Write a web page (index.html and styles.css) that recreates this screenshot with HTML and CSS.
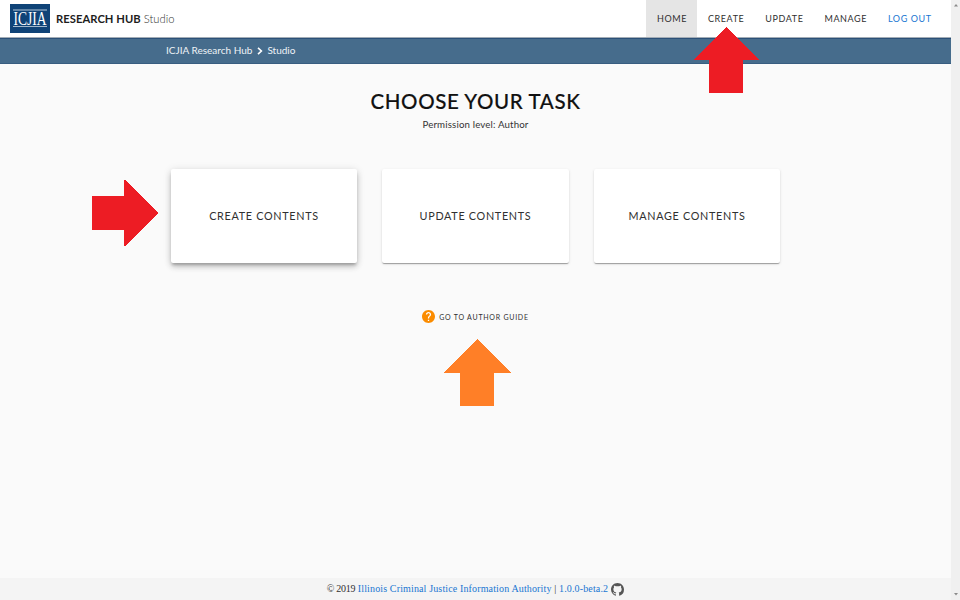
FILE: index.html
```html
<!DOCTYPE html>
<html lang="en">
<head>
<meta charset="utf-8">
<title>Research Hub Studio</title>
<link rel="stylesheet" href="styles.css">
</head>
<body>
<div class="page">
  <header class="header">
    <div class="brand">
      <svg class="logo" viewBox="0 0 40 29" role="img" aria-label="ICJIA">
        <rect width="40" height="29" fill="#0f4377"/>
        <path d="M3 6H37" stroke="#b9cbdb" stroke-width="1"/>
        <path d="M3 22.5H37" stroke="#a3b8cc" stroke-width="1"/>
        <text x="3.5" y="20.5" textLength="33" lengthAdjust="spacingAndGlyphs" class="logo-text">ICJIA</text>
      </svg>
      <span class="brand-name">RESEARCH HUB</span>
      <span class="brand-sub">Studio</span>
    </div>
    <nav class="nav">
      <a class="nav-item active">HOME</a>
      <a class="nav-item">CREATE</a>
      <a class="nav-item">UPDATE</a>
      <a class="nav-item">MANAGE</a>
      <a class="nav-item logout">LOG OUT</a>
    </nav>
  </header>
  <div class="crumbs">
    <span class="crumb-root">ICJIA Research Hub</span>
    <svg class="chevron" viewBox="0 0 6 8"><path d="M1 .8 4.4 4 1 7.2" fill="none" stroke="#fff" stroke-width="1.6"/></svg>
    <span>Studio</span>
  </div>
  <main class="main">
    <h1 class="title">CHOOSE YOUR TASK</h1>
    <p class="permission">Permission level: Author</p>
    <div class="cards">
      <a class="card raised">CREATE CONTENTS</a>
      <a class="card">UPDATE CONTENTS</a>
      <a class="card">MANAGE CONTENTS</a>
    </div>
    <a class="guide">
      <svg class="help" viewBox="2 2 20 20"><path fill="#fff" d="M6 5h12v15H6z"/><path fill="#fb8c00" d="M12 2C6.48 2 2 6.48 2 12s4.48 10 10 10 10-4.48 10-10S17.52 2 12 2zm1 17h-2v-2h2v2zm2.07-7.75l-.9.92C13.45 12.9 13 13.5 13 15h-2v-.5c0-1.1.45-2.1 1.17-2.83l1.24-1.26c.37-.36.59-.86.59-1.41 0-1.1-.9-2-2-2s-2 .9-2 2H8c0-2.21 1.79-4 4-4s4 1.79 4 4c0 .88-.36 1.68-.93 2.25z"/></svg>
      <span>GO TO AUTHOR GUIDE</span>
    </a>
  </main>
  <footer class="footer">
    <span class="copy"><span class="year">© 2019</span> <a>Illinois Criminal Justice Information Authority</a> | <a>1.0.0-beta.2</a></span>
    <svg class="github" viewBox="0 0 16 16"><path fill="#555" d="M8 0C3.58 0 0 3.58 0 8c0 3.54 2.29 6.53 5.47 7.59.4.07.55-.17.55-.38 0-.19-.01-.82-.01-1.49-2.01.37-2.53-.49-2.69-.94-.09-.23-.48-.94-.82-1.13-.28-.15-.68-.52-.01-.53.63-.01 1.08.58 1.23.82.72 1.21 1.87.87 2.33.66.07-.52.28-.87.51-1.07-1.78-.2-3.64-.89-3.64-3.95 0-.87.31-1.59.82-2.15-.08-.2-.36-1.02.08-2.12 0 0 .67-.21 2.2.82.64-.18 1.32-.27 2-.27s1.36.09 2 .27c1.53-1.04 2.2-.82 2.2-.82.44 1.1.16 1.92.08 2.12.51.56.82 1.27.82 2.15 0 3.07-1.87 3.75-3.65 3.95.29.25.54.73.54 1.48 0 1.07-.01 1.93-.01 2.2 0 .21.15.46.55.38A8.01 8.01 0 0 0 16 8c0-4.42-3.58-8-8-8z"/></svg>
  </footer>
</div>
<div class="scrollbar">
  <svg class="tick" viewBox="0 0 4 3"><path d="M2 0 4 2.5H0z" fill="#8a8a8a"/></svg>
  <svg class="tick" viewBox="0 0 4 3"><path d="M0 0H4L2 2.5z" fill="#8a8a8a"/></svg>
</div>
<svg class="arrow arrow-top" viewBox="0 0 66 66" shape-rendering="crispEdges"><path d="M33 0 66 33H50V66H16V33H0z" fill="#ed1c24"/></svg>
<svg class="arrow arrow-left" viewBox="0 0 66 66" shape-rendering="crispEdges"><path d="M66 33 33 66H32V50H0V16H32V0H33z" fill="#ed1c24"/></svg>
<svg class="arrow arrow-guide" viewBox="0 0 67 67" shape-rendering="crispEdges"><path d="M33.5 0 67 34H50V67H16V34H0z" fill="#ff7f27"/></svg>
</body>
</html>
```

FILE: styles.css
```css
* { box-sizing: border-box; }
body {
  margin: 0;
  width: 960px;
  height: 600px;
  display: flex;
  position: relative;
  overflow: hidden;
  background: #fafafa;
  color: #303030;
  font-family: Lato, "Liberation Sans", sans-serif;
}
.page { width: 951px; display: flex; flex-direction: column; }
.header {
  height: 38px;
  display: flex;
  justify-content: space-between;
  background: #fff;
  border-bottom: 1px solid #a3adb6;
}
.brand { display: flex; align-items: center; padding-left: 10px; font-size: 11.2px; white-space: nowrap; }
.logo { width: 40px; height: 29px; margin: -1px 6px 0 0; overflow: visible; }
.logo-text { font: 18px "Liberation Serif", serif; fill: #fff; }
.brand-name { font-weight: 700; color: #1d1d1d; margin-right: 3px; letter-spacing: .06px; }
.brand-sub { font-weight: 300; color: #333; }
.nav { display: flex; padding-right: 9px; }
.nav-item {
  display: flex;
  align-items: center;
  padding: 0 10.3px 0 10.6px;
  font-size: 9px;
  letter-spacing: .6px;
}
.nav-item.active { background: #e5e5e5; }
.nav-item.logout { color: #1976d2; }
.crumbs {
  height: 26px;
  display: flex;
  align-items: center;
  padding: 0 0 2px 166px;
  background: #466c8c;
  border-top: 1px solid #2b5078;
  border-bottom: 1px solid #385d80;
  color: #eef3f7;
  font-size: 10px;
}
.chevron { width: 6px; height: 8px; margin: 2px 4px 0 5px; }
.main { flex: 1; display: flex; flex-direction: column; align-items: center; }
.title { margin: 24px 0 0; font-size: 20.5px; line-height: 26px; font-weight: 500; letter-spacing: .6px; color: #111; -webkit-text-stroke: .15px #111; }
.permission { margin: 3px 0 0; font-size: 9.7px; line-height: 14px; color: #333; letter-spacing: .15px; }
.cards { display: flex; gap: 25px; margin-top: 38px; }
.card {
  width: 186.5px;
  height: 94px;
  display: flex;
  align-items: center;
  justify-content: center;
  padding-bottom: 1px;
  border-radius: 2px;
  background: #fff;
  font-size: 10.8px;
  letter-spacing: .7px;
  box-shadow: 0 2px 1px -1px rgba(0,0,0,.2), 0 1px 1px rgba(0,0,0,.14), 0 1px 3px rgba(0,0,0,.12);
}
.card.raised { box-shadow: 0 3px 3px -1px rgba(0,0,0,.22), 0 4px 6px rgba(0,0,0,.16), 0 1px 8px rgba(0,0,0,.12); }
.guide { display: flex; align-items: center; gap: 4px; margin-top: 47px; font-size: 7px; letter-spacing: .75px; }
.help { width: 13px; height: 13px; }
.footer {
  height: 22px;
  display: flex;
  align-items: center;
  justify-content: center;
  gap: 3px;
  background: #f4f4f4;
  font: 10px "Liberation Serif", serif;
  letter-spacing: .14px;
}
.copy { margin-top: -2px; }
.year { letter-spacing: -.3px; }
.footer a { color: #1976d2; }
.github { width: 13px; height: 13px; margin-top: 1px; }
.scrollbar {
  width: 9px;
  display: flex;
  flex-direction: column;
  justify-content: space-between;
  align-items: center;
  padding: 4px 0;
  background: #f0f0f0;
}
.tick { width: 4px; height: 3px; }
.arrow { position: absolute; }
.arrow-top { left: 693px; top: 27px; width: 66px; height: 66px; }
.arrow-left { left: 92px; top: 180px; width: 66px; height: 66px; }
.arrow-guide { left: 444px; top: 339px; width: 67px; height: 67px; }
```
